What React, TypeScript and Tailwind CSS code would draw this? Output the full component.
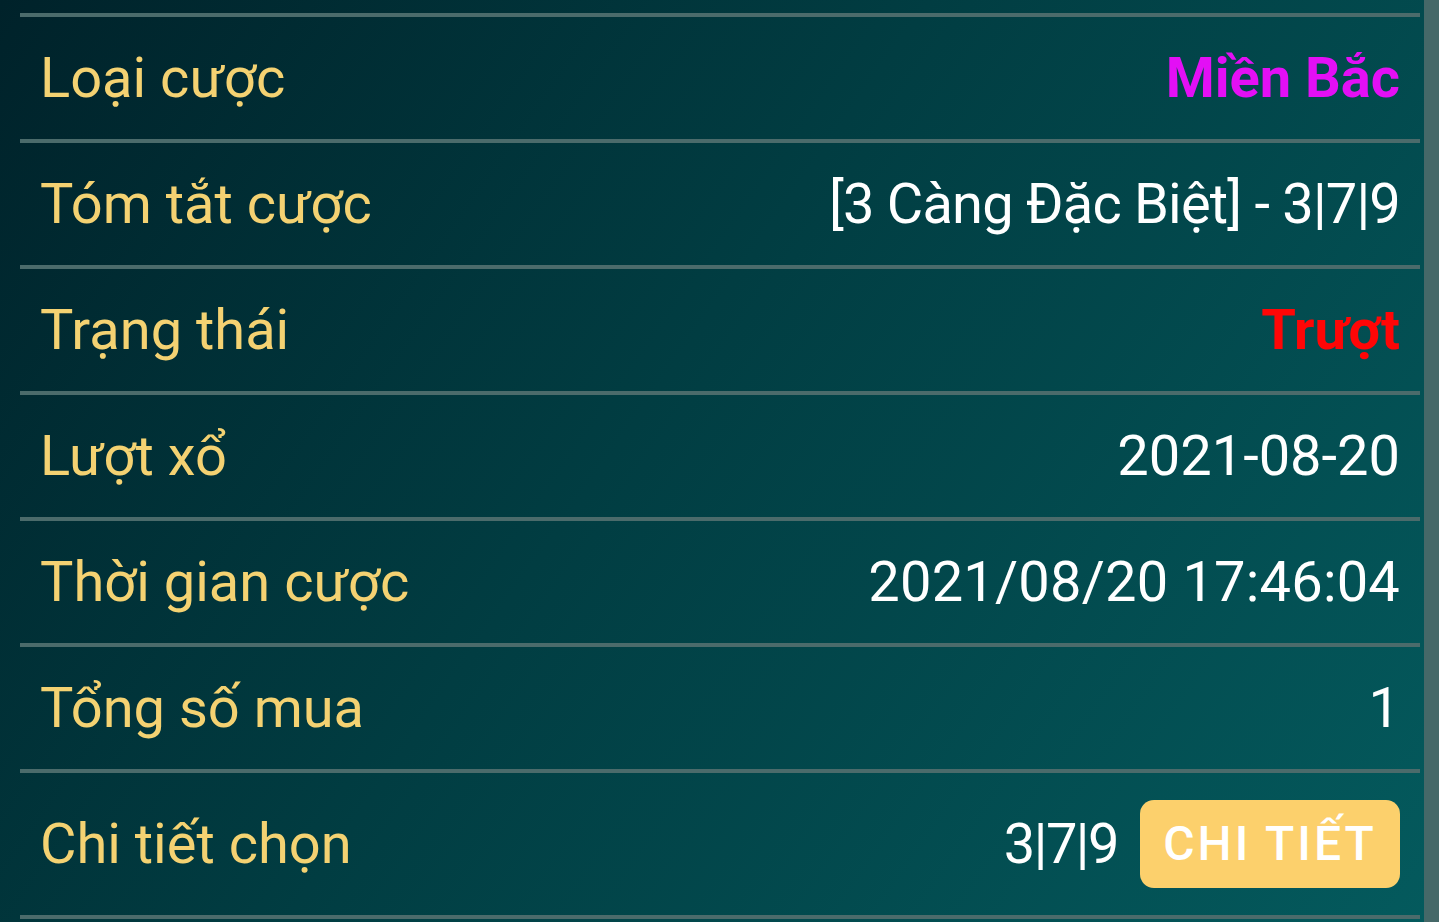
import React from 'react';

const rows = [
  { label: 'Loại cược', value: 'Miền Bắc', cls: 'text-[#e30ff5] font-bold' },
  { label: 'Tóm tắt cược', value: '[3 Càng Đặc Biệt] - 3|7|9', cls: 'text-white tracking-[-0.8px]' },
  { label: 'Trạng thái', value: 'Trượt', cls: 'text-[#ff0606] font-bold' },
  { label: 'Lượt xổ', value: '2021-08-20', cls: 'text-white' },
  { label: 'Thời gian cược', value: '2021/08/20 17:46:04', cls: 'text-white tracking-[0.2px]' },
  { label: 'Tổng số mua', value: '1', cls: 'text-white' },
];

export default function App() {
  return (
    <div className="flex w-[1439px] h-[922px] overflow-hidden font-['Roboto',sans-serif]">
      {/* main panel */}
      <div className="w-[1424px] h-full pt-[13px] pl-5 pr-1 bg-[linear-gradient(125deg,#00222a_0%,#013d42_45%,#045a5d_100%)]">
        {rows.map((r) => (
          <div
            key={r.label}
            className="h-[126px] border-t-4 border-[#4b6b6b] flex items-center justify-between pl-5 pr-5 text-[56px] leading-none"
          >
            <span className="text-[#f4d272]">{r.label}</span>
            <span className={r.cls}>{r.value}</span>
          </div>
        ))}
        <div className="h-[150px] border-y-4 border-[#4b6b6b] flex items-center justify-between pl-5 pr-5 text-[56px] leading-none">
          <span className="text-[#f4d272]">Chi tiết chọn</span>
          <div className="flex items-center gap-[22px]">
            <span className="text-white tracking-[-1.5px]">3|7|9</span>
            <button className="w-[260px] h-[88px] rounded-[14px] bg-[#fcd06c] text-white text-[48px] font-medium tracking-[3px]">
              CHI TIẾT
            </button>
          </div>
        </div>
      </div>
      {/* right edge strip */}
      <div className="w-[15px] h-full bg-[#456868]" />
    </div>
  );
}
